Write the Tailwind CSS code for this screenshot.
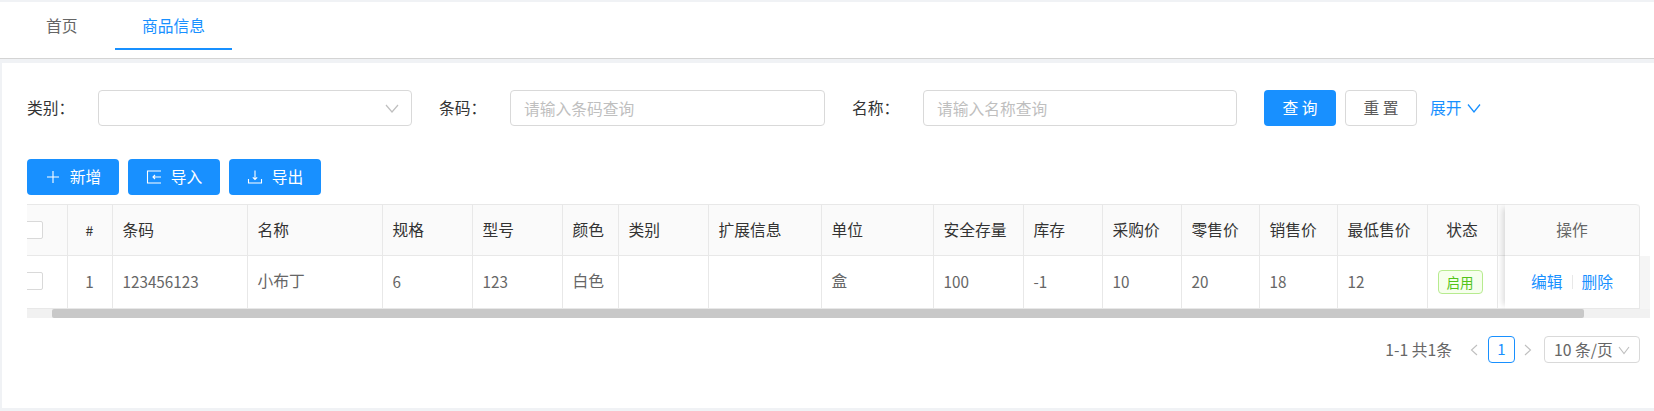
<!DOCTYPE html>
<html lang="zh-CN">
<head>
    <meta charset="UTF-8">
    <title>商品信息</title>
    <script src="https://cdn.jsdelivr.net/npm/@tailwindcss/browser@4"></script>
</head>
<body class="w-[1654px] h-[411px] overflow-hidden bg-[#f0f2f5] pt-[2px] text-[15.75px] leading-[24px] text-[#666666] font-['Noto_Sans_CJK_SC','Noto_Sans',sans-serif]">
    <!-- tabs -->
    <div class="h-[57px] bg-white border-b border-[#d4d4d4] flex items-start pl-[46px]">
        <div class="mt-[12px] w-[31px] whitespace-nowrap">首页</div>
        <div class="ml-[38px] w-[117px] h-[48px] border-b-2 border-[#1890ff] pt-[12px] text-center text-[#1890ff]">商品信息</div>
    </div>

    <div class="mt-[4px] h-[345px] ml-[2px] bg-white pl-[25px] pr-[4px] pt-[27px]">
        <!-- search form -->
        <div class="flex items-center h-[36px] text-[#333333]">
            <label class="w-[71px]">类别：</label>
            <div class="w-[314px] h-[36px] border border-[#d9d9d9] rounded-[4px] flex items-center justify-end pr-[12px]">
                <svg class="w-[14px] h-[14px]" viewBox="0 0 14 14" fill="none" stroke="#bfbfbf" stroke-width="1.2"><path d="M1 4l6 7 6-7"/></svg>
            </div>
            <label class="ml-[27px] w-[71px]">条码：</label>
            <input class="w-[315px] h-[36px] border border-[#d9d9d9] rounded-[4px] px-[13px] outline-none placeholder:text-[#bfbfbf]" placeholder="请输入条码查询">
            <label class="ml-[27px] w-[71px]">名称：</label>
            <input class="w-[314px] h-[36px] border border-[#d9d9d9] rounded-[4px] px-[13px] outline-none placeholder:text-[#bfbfbf]" placeholder="请输入名称查询">
            <button class="ml-[27px] w-[72px] h-[36px] rounded-[4px] bg-[#1890ff] text-white">查 询</button>
            <button class="ml-[9px] w-[72px] h-[36px] rounded-[4px] border border-[#d9d9d9] text-[#595959]">重 置</button>
            <a class="ml-[13px] flex items-center gap-[5px] text-[#1890ff]">展开
                <svg class="w-[14px] h-[14px]" viewBox="0 0 14 14" fill="none" stroke="#1890ff" stroke-width="1.3"><path d="M1 3.5l6 7.5 6-7.5"/></svg>
            </a>
        </div>

        <!-- toolbar -->
        <div class="mt-[33px] flex gap-[9px] text-white">
            <button class="w-[92px] h-[36px] rounded-[4px] bg-[#1890ff] flex items-center justify-center gap-[9px]">
                <svg class="w-4 h-4" viewBox="0 0 16 16" fill="none" stroke="white" stroke-width="1.1"><path d="M8 2v12M2 8h12"/></svg>
                <span>新增</span>
            </button>
            <button class="w-[92px] h-[36px] rounded-[4px] bg-[#1890ff] flex items-center justify-center gap-[9px]">
                <svg class="w-4 h-4" viewBox="0 0 16 16" fill="none" stroke="white" stroke-width="1.1"><path d="M15 2H1.5v12H15M15 8H7M9 6L7 8l2 2"/></svg>
                <span>导入</span>
            </button>
            <button class="w-[92px] h-[36px] rounded-[4px] bg-[#1890ff] flex items-center justify-center gap-[9px]">
                <svg class="w-4 h-4" viewBox="0 0 16 16" fill="none" stroke="white" stroke-width="1.1"><path d="M8 1.5v9M5.8 8.3L8 10.5l2.2-2.2M1.5 10v4h13v-4"/></svg>
                <span>导出</span>
            </button>
        </div>

        <!-- table -->
        <div class="relative mt-[9px] w-[1623px] h-[114px] overflow-hidden">
            <table class="table-fixed w-[1623px] border-collapse">
                <colgroup>
                    <col class="w-[40px]"><col class="w-[45px]"><col class="w-[135px]"><col class="w-[135px]"><col class="w-[90px]"><col class="w-[90px]">
                    <col class="w-[56px]"><col class="w-[90px]"><col class="w-[113px]"><col class="w-[112px]"><col class="w-[90px]"><col class="w-[79px]">
                    <col class="w-[79px]"><col class="w-[78px]"><col class="w-[78px]"><col class="w-[90px]"><col class="w-[70px]"><col class="w-[10px]"><col>
                </colgroup>
                <thead class="text-[#333333]">
                    <tr class="h-[51px] [&>th]:font-normal [&>th]:bg-[#fafafa] [&>th]:border-t [&>th]:border-r [&>th]:border-b [&>th]:border-[#e8e8e8] [&>th]:text-left [&>th]:pl-[10px] [&>th]:pr-0">
                        <th class="overflow-hidden !pl-0"><div class="-ml-[2px] w-[18px] h-[18px] bg-white border border-[#d9d9d9] rounded-[2px]"></div></th>
                        <th class="!text-center !pl-0 text-[14px]">#</th>
                        <th>条码</th><th>名称</th><th>规格</th><th>型号</th>
                        <th>颜色</th><th>类别</th><th>扩展信息</th><th>单位</th>
                        <th>安全存量</th><th>库存</th><th>采购价</th><th>零售价</th><th>销售价</th>
                        <th>最低售价</th><th class="!text-center !pl-0">状态</th><th class="!pl-0"></th><th class="!border-0 !bg-white"></th>
                    </tr>
                </thead>
                <tbody>
                    <tr class="h-[53px] [&>td]:border-r [&>td]:border-b [&>td]:border-[#e8e8e8] [&>td]:pl-[10px] [&>td]:pb-[2px]">
                        <td class="overflow-hidden !pl-0"><div class="-ml-[2px] w-[18px] h-[18px] border border-[#d9d9d9] rounded-[2px]"></div></td>
                        <td class="text-center !pl-0 text-[15.25px]">1</td>
                        <td class="text-[15.25px]">123456123</td><td>小布丁</td><td class="text-[15.25px]">6</td><td class="text-[15.25px]">123</td>
                        <td>白色</td><td></td><td></td><td>盒</td>
                        <td class="text-[15.25px]">100</td><td class="text-[15.25px]">-1</td><td class="text-[15.25px]">10</td><td class="text-[15.25px]">20</td><td class="text-[15.25px]">18</td>
                        <td class="text-[15.25px]">12</td>
                        <td class="!pl-0 !pb-0"><span class="block ml-[10px] w-[45px] h-[24px] leading-[22px] text-center text-[13.5px] rounded-[4px] border border-[#b7eb8f] bg-[#f6ffed] text-[#52c41a]">启用</span></td>
                        <td class="!pl-0"></td>
                        <td class="!border-0 !bg-[#f5f5f5]"></td>
                    </tr>
                </tbody>
            </table>

            <!-- fixed action column -->
            <div class="absolute top-0 left-[1478px] w-[135px] h-[105px] bg-white border-r border-[#e8e8e8] shadow-[-6px_0_6px_-4px_rgba(0,0,0,0.15)] rounded-tr-[4px] text-center">
                <div class="h-[52px] bg-[#fafafa] border-t border-b border-[#e8e8e8] leading-[50px] rounded-tr-[4px]">操作</div>
                <div class="h-[53px] border-b border-[#e8e8e8] flex items-center justify-center text-[#1890ff]">
                    <span>编辑</span><span class="mx-[9px] w-px h-[14px] bg-[#e8e8e8]"></span><span>删除</span>
                </div>
            </div>

            <!-- horizontal scrollbar -->
            <div class="absolute left-0 top-[105px] w-full h-[9px] bg-[#f1f1f1]">
                <div class="ml-[25px] w-[1532px] h-full bg-[#c8c8c8] rounded-[2px]"></div>
            </div>
        </div>

        <!-- pagination -->
        <div class="mt-[18px] w-[1613px] h-[27px] flex items-center justify-end">
            <span>1-1 共1条</span>
            <svg class="ml-[18px] w-[8px] h-[12px]" viewBox="0 0 8 12" fill="none" stroke="#bfbfbf" stroke-width="1.1"><path d="M7 1L1.5 6 7 11"/></svg>
            <span class="ml-[10px] w-[27px] h-[27px] leading-[23px] border border-[#1890ff] rounded-[4px] text-center text-[#1890ff] text-[15px]">1</span>
            <svg class="ml-[9px] w-[8px] h-[12px]" viewBox="0 0 8 12" fill="none" stroke="#bfbfbf" stroke-width="1.1"><path d="M1 1l5.5 5L1 11"/></svg>
            <div class="ml-[12px] w-[96px] h-[27px] border border-[#d9d9d9] rounded-[4px] flex items-center pl-[9px] gap-[5px] whitespace-nowrap">
                <span>10 条/页</span>
                <svg class="w-[12px] h-[12px]" viewBox="0 0 12 12" fill="none" stroke="#bfbfbf" stroke-width="1.1"><path d="M1 3l5 6.5L11 3"/></svg>
            </div>
        </div>
    </div>
</body>
</html>
